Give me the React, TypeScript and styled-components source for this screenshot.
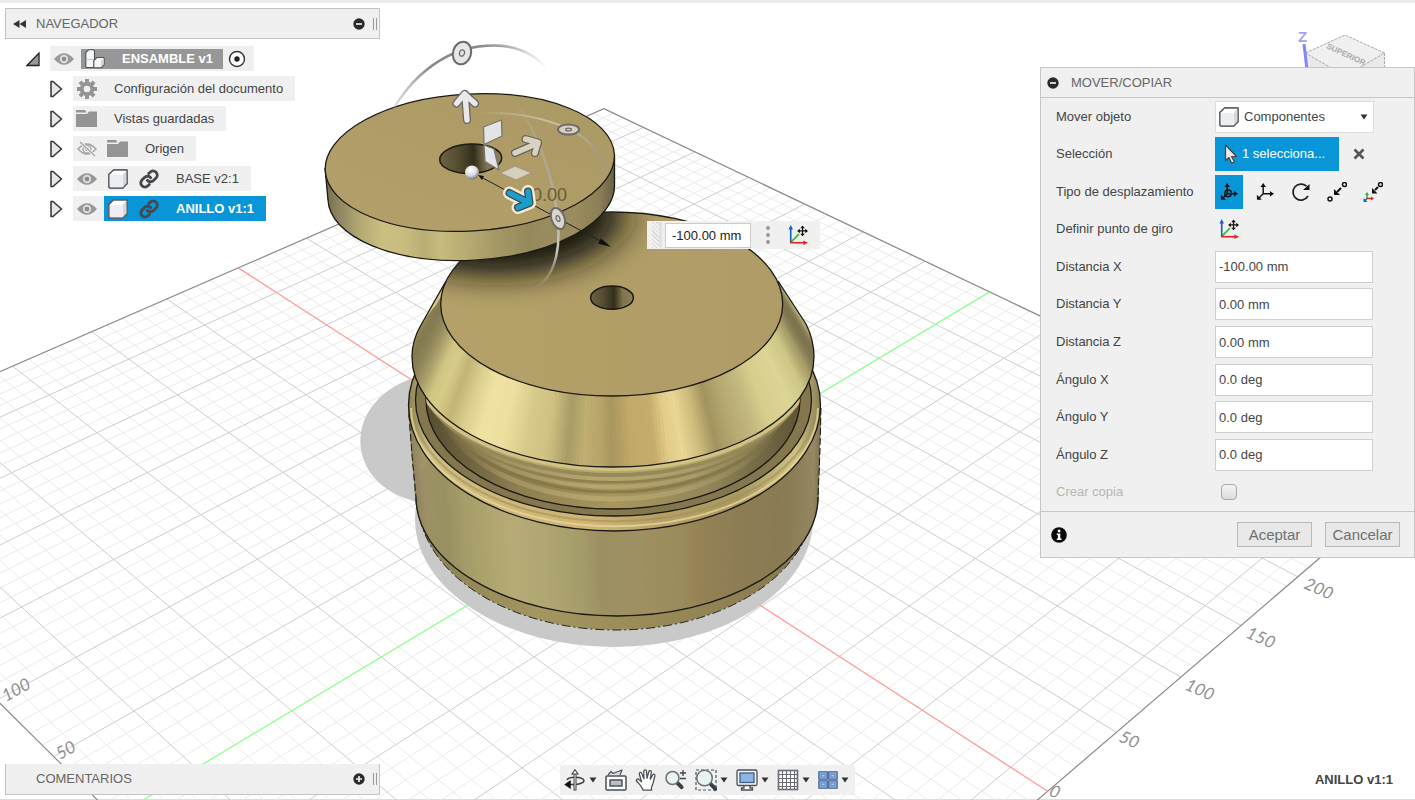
import React from 'react';
import styled, { createGlobalStyle, css } from 'styled-components';

const GlobalStyle = createGlobalStyle`
  *, *::before, *::after { box-sizing: border-box; }
  body { margin: 0; background: #fff; }
  body, button, input, select {
    font-family: "Liberation Sans", Arial, sans-serif;
    font-size: 13px;
    line-height: 16px;
    color: #444;
  }
  button { border: 0; padding: 0; background: none; cursor: pointer; }
  svg { display: block; flex: none; }
`;

/* ---------- 3D scene maths ---------- */

type Point = [number, number];

/* Perspective projection of a ground-plane point, in millimetres. */
const project = (x: number, y: number): Point => {
  const w = 1 - 0.000576 * x + 0.000578 * y;
  return [
    (619.3 + 0.9832 * x + 1.8063 * y) / w,
    (514.2 + 0.5702 * x - 0.5722 * y) / w,
  ];
};

const GRID = { x0: -340, x1: 270, y0: -290, y1: 300 };

const pt = ([x, y]: Point) => `${x.toFixed(1)},${y.toFixed(1)}`;
const lineX = (x: number) => `M${pt(project(x, GRID.y0))}L${pt(project(x, GRID.y1))}`;
const lineY = (y: number) => `M${pt(project(GRID.x0, y))}L${pt(project(GRID.x1, y))}`;

const steps = (from: number, to: number, keep: (v: number) => boolean) => {
  const out: number[] = [];
  for (let v = from; v <= to; v += 10) if (keep(v)) out.push(v);
  return out;
};
const gridPath = (keep: (v: number) => boolean) =>
  steps(GRID.x0, GRID.x1, keep).map(lineX).join('') +
  steps(GRID.y0, GRID.y1, keep).map(lineY).join('');

const minorGrid = gridPath((v) => v % 50 !== 0);
const majorGrid = gridPath((v) => v % 50 === 0 && v !== 0);
const border =
  'M' +
  [
    project(GRID.x0, GRID.y0),
    project(GRID.x0, GRID.y1),
    project(GRID.x1, GRID.y1),
    project(GRID.x1, GRID.y0),
  ].map(pt).join('L') + 'Z';

type Stop = [number, string];
type Ring = { cx: number; cy: number; rx: number; ry: number };

const mix = (stops: Stop[], x: number) => {
  const i = stops.findIndex(([p]) => p >= x);
  if (i === 0) return stops[0][1];
  if (i < 0) return stops[stops.length - 1][1];
  const [p0, c0] = stops[i - 1];
  const [p1, c1] = stops[i];
  const k = (x - p0) / (p1 - p0);
  const ch = (c: string, n: number) => parseInt(c.slice(1 + n * 2, 3 + n * 2), 16);
  const rgb = [0, 1, 2].map((n) => Math.round(ch(c0, n) + (ch(c1, n) - ch(c0, n)) * k));
  return `rgb(${rgb.join(',')})`;
};

/* Shaded surface of revolution between two rings, one facet per degree. */
const Surface = ({ top, bottom, stops, from = 0, to = 180 }: {
  top: Ring; bottom: Ring; stops: Stop[]; from?: number; to?: number;
}) => {
  const at = (r: Ring, deg: number): Point => {
    const a = (deg * Math.PI) / 180;
    return [r.cx + r.rx * Math.cos(a), r.cy + r.ry * Math.sin(a)];
  };
  const facets: React.ReactNode[] = [];
  for (let d = from; d < to; d += 1) {
    const fill = mix(stops, at(bottom, d + 0.5)[0]);
    facets.push(
      <polygon
        key={d}
        points={[at(top, d), at(top, d + 1), at(bottom, d + 1), at(bottom, d)].map(pt).join(' ')}
        fill={fill}
        stroke={fill}
        strokeWidth="0.7"
      />,
    );
  }
  return <g>{facets}</g>;
};

const CONE_TOP: Ring = { cx: 611.7, cy: 304, rx: 171, ry: 92 };
const CONE_BOTTOM: Ring = { cx: 613, cy: 357, rx: 201, ry: 110 };

const coneStops: Stop[] = [
  [412, '#857b52'], [420, '#a99f6c'], [428, '#d2c684'], [436, '#d9cc8a'], [448, '#c3b577'],
  [462, '#dccf8e'], [478, '#f0e2a2'], [500, '#efe1a0'], [524, '#d8ca8a'], [545, '#d2c283'],
  [567, '#a89c66'], [583, '#c0af70'], [600, '#b7a569'], [612, '#a9965f'], [633, '#c4aa6a'],
  [655, '#c6ac6c'], [670, '#e2ce88'], [684, '#ead796'], [700, '#cfbd7d'], [717, '#a3945f'],
  [735, '#b6a970'], [755, '#c3b981'], [770, '#d8cf8d'], [792, '#ddd697'], [804, '#d0c888'],
  [811, '#a59b68'], [814, '#7d7450'],
];
const ringStops: Stop[] = [
  [328, '#7c7353'], [345, '#9a9068'], [360, '#b5aa75'], [385, '#cdc183'], [405, '#c9bd80'],
  [425, '#b9ae73'], [440, '#c8bc80'], [462, '#bcae74'], [500, '#a39765'], [530, '#958a5c'],
  [545, '#998c5f'], [575, '#9c8d60'], [600, '#8c7f58'], [614, '#6c6348'],
];
const bodyStops: Stop[] = [
  [415, '#8d8360'], [428, '#9e9267'], [450, '#9a9162'], [470, '#a79e69'], [515, '#b7ac77'],
  [545, '#b0a772'], [580, '#a69d6c'], [602, '#9c9062'], [640, '#9e9062'], [680, '#9b8c5c'],
  [700, '#968255'], [740, '#8d7d55'], [780, '#897b54'], [812, '#948762'], [818, '#7f7454'],
];

const CONE_SIDES = 'M446 281L421 325Q412 340 412 357A201 110 0 0 0 814 357Q814 340 806 324L778 281';

const Model = () => (
  <g>
    <path d="M413 378C378 390 356 418 361 450C367 482 396 499 424 503Z" fill="#c9c9c9" />
    <ellipse cx="614" cy="519" rx="199" ry="128" fill="#c9c9c9" />

    {/* base: fillet, outer wall and rim */}
    <ellipse cx="616" cy="500" rx="198" ry="130" fill="url(#fillet)" stroke="#222" strokeWidth="1" strokeDasharray="9 3 2 3" />
    <Surface
      top={{ cx: 614.5, cy: 405, rx: 206, ry: 126 }}
      bottom={{ cx: 617, cy: 497, rx: 201, ry: 119 }}
      stops={bodyStops}
    />
    <path d="M416 497A201 119 0 0 0 818 497" fill="none" stroke="#1b1a14" strokeWidth="1.3" />
    <path d="M409 414L412 455L416 497M821 408L820 450L818 497" fill="none" stroke="#1b1a14" strokeWidth="1" strokeDasharray="7 3" />
    <ellipse cx="614.5" cy="405" rx="206" ry="126" fill="url(#rim)" stroke="#1b1a14" strokeWidth="1.3" />
    <path d="M411 408A203 118 0 0 0 818 408" fill="none" stroke="#e6d69a" strokeWidth="2" opacity=".8" />
    <path d="M413 404A201 117 0 0 0 816 404" fill="none" stroke="#a18f59" strokeWidth="2" opacity=".6" />
    <ellipse cx="613.5" cy="400" rx="198" ry="116" fill="#84774e" stroke="#1b1a14" strokeWidth="1.3" />
    <ellipse cx="613" cy="400" rx="187" ry="109" fill="url(#groove)" stroke="#1b1a14" strokeWidth="1.3" />
    <g clipPath="url(#grooveClip)" fill="none">
      <ellipse cx="613" cy="389" rx="178" ry="110" stroke="url(#sheen)" strokeWidth="5" />
      <ellipse cx="613" cy="384" rx="180" ry="108" stroke="#857647" strokeWidth="3" opacity=".8" />
      <ellipse cx="613" cy="379" rx="184" ry="108" stroke="url(#sheen)" strokeWidth="4" />
      <ellipse cx="613" cy="374" rx="188" ry="108" stroke="#8f8052" strokeWidth="3" />
      <ellipse cx="613" cy="370" rx="192" ry="109" stroke="url(#sheen)" strokeWidth="4" />
      <ellipse cx="613" cy="366" rx="196" ry="109" stroke="#978a5a" strokeWidth="4" />
      <ellipse cx="613" cy="362" rx="198" ry="109" stroke="#b9a86c" strokeWidth="4" />
      <ellipse cx="613" cy="359" rx="201" ry="110" stroke="#d2c384" strokeWidth="4" />
    </g>

    {/* base: conical head */}
    <path d={CONE_SIDES} fill="#9a9062" />
    <g clipPath="url(#coneSides)">
      <Surface top={CONE_TOP} bottom={CONE_BOTTOM} stops={coneStops} from={-28} to={208} />
    </g>
    <path d={CONE_SIDES} fill="none" stroke="#1b1a14" strokeWidth="1.3" />
    <ellipse {...CONE_TOP} fill="url(#coneTop)" stroke="#1b1a14" strokeWidth="1.3" />
    <g clipPath="url(#coneClip)">
      <ellipse cx="496" cy="214" rx="128" ry="62" fill="#17130a" filter="url(#soft)" />
    </g>
    <ellipse cx="612" cy="297.700" rx="21.400" ry="11.600" fill="url(#bore)" stroke="#1b1a14" strokeWidth="1.500" />

    {/* ring */}
    <path d="M325 168L328 200A143 68 -3.300 0 0 614.500 184L614.500 155Z" fill="#a39765" />
    <g clipPath="url(#ringClip)">
      <Surface
        top={{ cx: 470, cy: 150, rx: 146, ry: 71 }}
        bottom={{ cx: 471, cy: 195, rx: 146, ry: 74 }}
        stops={ringStops}
        from={-10}
        to={190}
      />
    </g>
    <path d="M325 168L328 200A143 68 -3.300 0 0 614.500 184L614.500 155" fill="none" stroke="#1b1a14" strokeWidth="1.3" />
    <ellipse cx="469.800" cy="162.500" rx="144.800" ry="68.500" transform="rotate(-3.300 469.800 162.500)" fill="url(#ringTop)" stroke="#1b1a14" strokeWidth="1.3" />
    <ellipse cx="470.700" cy="158.700" rx="31" ry="14.700" transform="rotate(-2 470.700 158.700)" fill="url(#bore)" stroke="#1b1a14" strokeWidth="1.5" />
  </g>
);

const Arrow = ({ shaft, head, fill, halo }: { shaft: string; head: string; fill: string; halo?: string }) => {
  const d = shaft + head;
  return (
    <g fill="none" strokeLinejoin="round" strokeLinecap="round">
      {halo && <path d={d} stroke={halo} strokeWidth="13" />}
      <path d={d} stroke={halo ? '#3d4a4c' : '#66645f'} strokeWidth="8" />
      <path d={d} stroke={fill} strokeWidth="5.500" />
    </g>
  );
};

const Handle = ({ x, y, rx, ry, turn, fill }: { x: number; y: number; rx: number; ry: number; turn: number; fill: string }) => (
  <g transform={`translate(${x} ${y}) rotate(${turn})`} stroke="#6a6a68" fill={fill}>
    <ellipse rx={rx} ry={ry} strokeWidth="2" />
    <ellipse rx={rx * 0.28} ry={ry * 0.28} strokeWidth="1.300" />
  </g>
);

const Manipulator = () => (
  <g>
    <g fill="none" strokeLinecap="round">
      <path d="M380 140C390 106 417 66 462 50C497 41 527 44 548 70" stroke="url(#arcA)" strokeWidth="2.500" />
      <path d="M477 113C512 111 545 118 569 129C592 140 608 160 603 178" stroke="url(#arcB)" strokeWidth="2" />
      <path d="M515 100C538 134 553 176 557 214C562 250 554 278 535 288" stroke="url(#arcC)" strokeWidth="2.500" />
    </g>
    <text x="532" y="201" fontFamily="Liberation Sans, Arial, sans-serif" fontSize="18" fill="#6b5d38">0.00</text>
    <path d="M480 176.500L604 243" stroke="#222" strokeWidth="1" />
    <path d="M611 247L598 243.500L601 238.500ZM478 175L484 176L482 180Z" fill="#111" />
    <Arrow shaft="M467 120L465 94" head="M456.500 103.500L464.500 94L475 103.500" fill="#e9e9eb" />
    <Arrow shaft="M515 153L538 143" head="M525.500 139L538 142.500L535 153" fill="#d9d2c3" />
    <g stroke="#77756f" strokeWidth="1.300" strokeLinejoin="round">
      <path d="M483.500 127L501.500 120L502 136L484 144.500Z" fill="#e4e4e6" />
      <path d="M484 145L494 149L499 170L485 161.500Z" fill="#e4e4e6" />
      <path d="M500 173L515 166L531.500 173L516 180Z" fill="#d6cebf" stroke="#a79a7c" />
    </g>
    <circle cx="472" cy="172.500" r="7" fill="url(#ball)" />
    <Arrow shaft="M509.500 193L528 202.500" head="M528 191.500L529.500 203L518 207.500" fill="#1a9fcb" halo="#f3ead6" />
    <Handle x={462} y={53} rx={9} ry={11.5} turn={16} fill="#e6e6e8" />
    <Handle x={568.5} y={129.500} rx={10.500} ry={5} turn={0} fill="#d8d2c3" />
    <Handle x={558} y={218.500} rx={6.500} ry={11} turn={-20} fill="#dad6cc" />
  </g>
);

const gridLabels: { text: string; x: number; y: number; turn: number }[] = [
  { text: '100', x: 6, y: 702, turn: -29 },
  { text: '50', x: 60, y: 760, turn: -29 },
  { text: '0', x: 1048, y: 795, turn: 24 },
  { text: '50', x: 1118, y: 741, turn: 24 },
  { text: '100', x: 1184, y: 689, turn: 24 },
  { text: '150', x: 1245, y: 637, turn: 24 },
  { text: '200', x: 1303, y: 588, turn: 24 },
];

const SceneSvg = styled.svg`
  position: absolute;
  inset: 0;
  width: 100%;
  height: 100%;
`;

const Scene = () => (
  <SceneSvg viewBox="0 0 1415 800" preserveAspectRatio="xMinYMin slice" aria-label="Vista del modelo">
    <defs>
      <linearGradient id="ringTop" x1="0" x2="1" y1="1" y2="0">
        <stop offset="0" stopColor="#b3a06b" /><stop offset=".5" stopColor="#af9c67" /><stop offset="1" stopColor="#ab9965" />
      </linearGradient>
      <linearGradient id="coneTop" x1="0" x2="1">
        <stop offset="0" stopColor="#b4a069" /><stop offset=".3" stopColor="#b3a068" /><stop offset="1" stopColor="#ae9b66" />
      </linearGradient>
      <linearGradient id="bore" x1="0" x2="1">
        <stop offset="0" stopColor="#6d6443" /><stop offset=".3" stopColor="#544c30" /><stop offset=".55" stopColor="#332d1b" />
        <stop offset=".75" stopColor="#7e734c" /><stop offset="1" stopColor="#8d8158" />
      </linearGradient>
      <linearGradient id="rim" x1="0" x2="1">
        <stop offset="0" stopColor="#8d8055" /><stop offset=".05" stopColor="#cdbf84" /><stop offset=".2" stopColor="#cdb87a" />
        <stop offset=".45" stopColor="#d0b574" /><stop offset=".6" stopColor="#b7a066" /><stop offset=".8" stopColor="#a89860" />
        <stop offset=".94" stopColor="#cfc282" /><stop offset="1" stopColor="#8a7f55" />
      </linearGradient>
      <linearGradient id="fillet" x1="0" x2="1">
        <stop offset="0" stopColor="#8a7f57" /><stop offset=".3" stopColor="#a3965f" /><stop offset=".6" stopColor="#998a58" />
        <stop offset="1" stopColor="#85774f" />
      </linearGradient>
      <linearGradient id="groove" x1="0" x2="1">
        <stop offset="0" stopColor="#564d30" /><stop offset=".25" stopColor="#8d7f52" /><stop offset=".5" stopColor="#a8965c" />
        <stop offset=".75" stopColor="#94865a" /><stop offset="1" stopColor="#5e5436" />
      </linearGradient>
      <linearGradient id="sheen" x1="0" x2="1">
        <stop offset="0" stopColor="#5e5436" /><stop offset=".2" stopColor="#a09160" /><stop offset=".45" stopColor="#b8a66c" />
        <stop offset=".7" stopColor="#aa9e6a" /><stop offset=".85" stopColor="#8f8458" /><stop offset="1" stopColor="#5e5436" />
      </linearGradient>
      <linearGradient id="arcA" gradientUnits="userSpaceOnUse" x1="380" x2="548" y1="0" y2="0">
        <stop offset="0" stopColor="#999" stopOpacity="0" /><stop offset=".3" stopColor="#888" /><stop offset=".6" stopColor="#888" />
        <stop offset=".8" stopColor="#bbb" /><stop offset="1" stopColor="#ccc" stopOpacity="0" />
      </linearGradient>
      <linearGradient id="arcB" gradientUnits="userSpaceOnUse" x1="477" x2="610" y1="0" y2="0">
        <stop offset="0" stopColor="#cfc8b4" stopOpacity="0" /><stop offset=".6" stopColor="#c9c3b2" /><stop offset=".9" stopColor="#a39c88" />
        <stop offset="1" stopColor="#a39c88" stopOpacity=".3" />
      </linearGradient>
      <linearGradient id="arcC" gradientUnits="userSpaceOnUse" x1="0" x2="0" y1="100" y2="288">
        <stop offset="0" stopColor="#bbb6a6" stopOpacity="0" /><stop offset=".4" stopColor="#a9a69c" /><stop offset=".8" stopColor="#c9c6bd" />
        <stop offset="1" stopColor="#ccc" stopOpacity="0" />
      </linearGradient>
      <radialGradient id="ball" cx=".4" cy=".3" r=".7">
        <stop offset="0" stopColor="#fff" /><stop offset=".6" stopColor="#dcdce0" /><stop offset="1" stopColor="#77767a" />
      </radialGradient>
      <filter id="soft" x="-30%" y="-60%" width="160%" height="220%"><feGaussianBlur stdDeviation="19 15" /></filter>
      <clipPath id="coneClip"><ellipse cx="611.7" cy="304" rx="170.500" ry="91.500" /></clipPath>
      <clipPath id="coneSides"><path d={CONE_SIDES} /></clipPath>
      <clipPath id="grooveClip"><ellipse cx="613" cy="400" rx="186.500" ry="108.500" /></clipPath>
      <clipPath id="ringClip"><path d="M325 168L328 200A143 68 -3.300 0 0 614.500 184L614.500 155Z" /></clipPath>
    </defs>

    <path d={minorGrid} stroke="#ebebeb" strokeWidth="1" fill="none" />
    <path d={majorGrid} stroke="#cdcdcd" strokeWidth="1" fill="none" />
    <path d={border} stroke="#8c8c8c" strokeWidth="1.200" fill="none" />
    <path d={lineY(0)} stroke="#ff9a9a" strokeWidth="1.300" />
    <path d={lineX(0)} stroke="#8dff8d" strokeWidth="1.300" />
    <g fontFamily="Lato, sans-serif" fontSize="17" fontStyle="italic" fill="#8f8f8f">
      {gridLabels.map((l) => (
        <text key={l.text + l.x} transform={`translate(${l.x} ${l.y}) rotate(${l.turn})`}>{l.text}</text>
      ))}
    </g>

    <Model />
    <Manipulator />

    {/* view cube */}
    <path d="M1305.500 53L1345 35L1384.500 53L1345 76Z" fill="#f0f0f0" />
    <path d="M1305.500 53L1345 76L1345 90L1306 90ZM1384.500 53L1345 76L1345 90L1384 90Z" fill="#e9e9e9" />
    <path d="M1305.500 53L1345 35L1384.500 53L1345 76ZM1305.500 53V80M1384.500 53V80" fill="none" stroke="#aaa" strokeDasharray="3 1" />
    <text transform="translate(1326 48) rotate(25)" fontFamily="Liberation Sans, Arial, sans-serif" fontSize="8" fontWeight="700" fill="#aaa">SUPERIOR</text>
    <path d="M1304 44L1307 70" stroke="#8484ff" strokeWidth="3" />
    <text x="1298" y="42" fontFamily="Liberation Sans, Arial, sans-serif" fontSize="15" fontWeight="700" fill="#a3a3f6">Z</text>
  </SceneSvg>
);

/* ---------- icons ---------- */

const EyeIcon = ({ off = false }: { off?: boolean }) => (
  <svg width="20" height="16" viewBox="0 0 20 16">
    {off ? (
      <g fill="none" stroke="#a3a3a3" strokeWidth="1.300">
        <path d="M1 8Q10 -2 19 8Q10 18 1 8Z" />
        <circle cx="10" cy="8" r="4" />
        <circle cx="10" cy="8" r="1.500" />
        <path d="M3 1L18 15" stroke="#f0f0f0" strokeWidth="3" />
        <path d="M3 1L18 15" />
      </g>
    ) : (
      <g>
        <path d="M0 8Q10 -3.500 20 8Q10 19.500 0 8Z" fill="#989898" />
        <circle cx="10" cy="8" r="4.200" fill="#dcdcdc" />
        <circle cx="10" cy="8" r="2.300" fill="#8b8b8b" />
      </g>
    )}
  </svg>
);

const FolderIcon = () => (
  <svg width="21" height="17" viewBox="0 0 21 17" fill="#949494">
    <path d="M0 0H9L10.500 2.500H0ZM0 4H11L13 1.500H21V17H0Z" />
  </svg>
);

const GearIcon = () => (
  <svg width="20" height="20" viewBox="-10 -10 20 20">
    {[0, 45, 90, 135].map((a) => (
      <rect key={a} x="-2" y="-10" width="4" height="20" fill="#949494" transform={`rotate(${a})`} />
    ))}
    <circle r="5.200" fill="none" stroke="#949494" strokeWidth="4" />
    <circle r="3.300" fill="#f0f0f0" />
  </svg>
);

const CubeIcon = () => (
  <svg width="20" height="20" viewBox="0 0 20 20" stroke="#5b5f66" strokeWidth="1.200" strokeLinejoin="round">
    <path d="M.8 5.500L5.500 .8H19L19.200 14.500L14.800 19.200H2L.8 18Z" fill="#fff" />
    <path d="M14.500 6L19 1.200V14.300L14.800 19Z" fill="#d5d8de" stroke="none" />
    <path d="M1.500 6H14.500V18.500H2Z" fill="#eceef1" stroke="none" />
    <path d="M.8 5.500L5.500 .8H19L19.200 14.500L14.800 19.200H2L.8 18Z" fill="none" />
  </svg>
);

const AssemblyIcon = () => (
  <svg width="20" height="20" viewBox="0 0 20 20" stroke="#4f5359" strokeWidth="1.100" strokeLinejoin="round" fill="#f6f7f9">
    <path d="M.8 3.500L3.500 .8H8.500L9.500 2V9L9 18.500H1.500L.8 17.500Z" />
    <path d="M1 10.500H8" stroke="#c3c7cd" />
    <path d="M8.800 11.500L12 8.500H18.500L19.200 9.500V15.500L16 18.800H9.500L8.800 18Z" />
    <path d="M16 12L18.600 9.500V15.200L16 18Z" fill="#d0d3d9" stroke="none" />
  </svg>
);

const LinkIcon = () => (
  <svg width="20" height="20" viewBox="0 0 24 24" fill="none" stroke="#46484d" strokeWidth="3.400" strokeLinecap="round">
    <path d="M10 13.500a5 5 0 0 0 7.400 .4l3-3a5 5 0 0 0-7.100-7.100l-1.700 1.700" />
    <path d="M14 10.500a5 5 0 0 0-7.400-.4l-3 3a5 5 0 0 0 7.100 7.100l1.700-1.700" />
  </svg>
);

const ToggleIcon = ({ open = false }: { open?: boolean }) => (
  <svg width="14" height="18" viewBox="0 0 14 18">
    {open ? (
      <path d="M13 3V15.500H1Z" fill="#999" stroke="#222" strokeWidth="1.300" />
    ) : (
      <path d="M1 1.500H3L11.500 9L3 16.500H1Z" fill="#e6e6e6" stroke="#333" strokeWidth="1.500" strokeLinejoin="round" />
    )}
  </svg>
);

const RoundIcon = ({ plus = false }: { plus?: boolean }) => (
  <svg width="12" height="12" viewBox="0 0 12 12">
    <circle cx="6" cy="6" r="5.700" fill="#2b2b2b" />
    <path d={plus ? 'M3 6H9M6 3V9' : 'M3 6H9'} stroke="#eee" strokeWidth="1.700" />
  </svg>
);

const PivotIcon = () => (
  <svg width="20" height="20" viewBox="0 0 22 22" fill="none">
    <path d="M3 19L12 10" stroke="#37c32a" strokeWidth="2" />
    <path d="M3 19.500V4" stroke="#1b62b5" strokeWidth="1.800" />
    <path d="M3 0L5.500 5H.5Z" fill="#1b62b5" />
    <path d="M2.500 19.500H18" stroke="#e02525" strokeWidth="1.800" />
    <path d="M22 19.500L17 17V22Z" fill="#e02525" />
    <path d="M16 2V11M11.500 6.500H20.500" stroke="#111" strokeWidth="1.400" />
    <path d="M16 .5L18.500 3.500H13.500ZM16 12.500L13.500 9.500H18.500ZM10 6.500L13 4V9ZM22 6.500L19 9V4Z" fill="#111" />
  </svg>
);

const AxesIcon = ({ ring = false }: { ring?: boolean }) => (
  <svg width="18" height="18" viewBox="0 0 20 20" fill="none" stroke="#111" strokeWidth="1.600">
    {ring && <circle cx="9" cy="11.500" r="3.700" />}
    <path d="M8 3V12H17M8 12L3 17" />
    <path d="M8 0L11 4.500H5ZM20 12L15.500 9V15ZM1 18.500V13L6.500 18.500Z" fill="#111" stroke="none" />
  </svg>
);

const RotateIcon = () => (
  <svg width="20" height="20" viewBox="0 0 20 20" fill="none" stroke="#222" strokeWidth="1.700">
    <path d="M15.500 4.200A8 8 0 1 0 17 14" />
    <path d="M18.500 2V8H12Z" fill="#111" stroke="none" />
  </svg>
);

const PointToPointIcon = () => (
  <svg width="20" height="20" viewBox="0 0 20 20" fill="none" stroke="#111" strokeWidth="1.500">
    <circle cx="3" cy="17" r="2" />
    <circle cx="17.500" cy="2.500" r="2" />
    <path d="M14 6L10 10" strokeWidth="2" />
    <path d="M7 13V7L13 13Z" fill="#111" stroke="none" />
  </svg>
);

const PointToPositionIcon = () => (
  <svg width="20" height="20" viewBox="0 0 20 20" fill="none" strokeWidth="1.500">
    <circle cx="17.500" cy="2.500" r="2" stroke="#111" />
    <path d="M15 5L12 8" stroke="#111" strokeWidth="2" />
    <path d="M9 11.500V6L14.500 11.500Z" fill="#111" />
    <path d="M4 17V12" stroke="#2faf2a" />
    <path d="M4 10L6 13H2Z" fill="#2faf2a" />
    <path d="M4 16.500H9" stroke="#e02525" />
    <path d="M11 16.500L8 14.500V18.500Z" fill="#e02525" />
    <path d="M4 16.500L2 18.500" stroke="#1b62b5" />
    <path d="M.5 20V16L4.500 20Z" fill="#1b62b5" />
  </svg>
);

const CursorIcon = () => (
  <svg width="14" height="20" viewBox="0 0 14 20">
    <path d="M1.500 1L12.500 12.500H7.500L10.500 18L7.500 19L5 13.500L1.500 16.500Z" fill="#e9e9e9" stroke="#444" strokeWidth="1.200" strokeLinejoin="round" />
  </svg>
);

const CrossIcon = () => (
  <svg width="12" height="12" viewBox="0 0 12 12"><path d="M1.500 1.500L10.500 10.500M10.500 1.500L1.500 10.500" stroke="#555" strokeWidth="2.600" /></svg>
);

const InfoIcon = () => (
  <svg width="16" height="16" viewBox="0 0 16 16">
    <circle cx="8" cy="8" r="7.800" fill="#0a0a0a" />
    <path d="M6.800 2.800H9.300V5.200H6.800ZM5.800 6.500H9.300V11.500H10.500V13H5.800V11.500H6.900V8H5.800Z" fill="#fff" />
  </svg>
);

const CaretIcon = () => (
  <svg width="8" height="6" viewBox="0 0 8 6"><path d="M.5 .5H7.500L4 5.500Z" fill="#333" /></svg>
);

const OrbitIcon = () => (
  <svg width="22" height="22" viewBox="0 0 22 22" fill="none" stroke="#3a3e45" strokeWidth="1.500">
    <path d="M3 11C4 8 15 7 19 10C22 13 17 15 12 15.500" />
    <path d="M11 4V21.500" strokeWidth="3" />
    <path d="M11 4V20.500" stroke="#f4f4f4" strokeWidth="1" />
    <path d="M11 .8L14 5H8Z" fill="#fff" strokeWidth="1.100" />
    <path d="M5 15.500H10" />
    <path d="M1.500 15.500L6 12.500V18.500Z" fill="#111" stroke="#111" />
  </svg>
);
const LookIcon = () => (
  <svg width="22" height="22" viewBox="0 0 22 22" fill="#fff" stroke="#4b5058" strokeWidth="1.500" strokeLinejoin="round">
    <path d="M3 6L6 2.500L8 4.500L17 1L15 6" fill="#dcdfe3" strokeWidth="1.200" />
    <rect x="1" y="7" width="20" height="14" rx="1" />
    <rect x="5" y="11" width="12" height="6" fill="#b9c0c4" />
  </svg>
);
const HandIcon = () => (
  <svg width="22" height="22" viewBox="0 0 22 22" fill="#fff" stroke="#4b5058" strokeWidth="1.300" strokeLinejoin="round">
    <path d="M8 21.200C7 17.500 3.500 14.500 1.300 11.500C1.200 9.800 3 9.500 4.200 10.700L6.500 12.800L4.300 5C4.200 3 6.300 2.900 6.900 4.700L8.900 9.700L8.800 2.200C9.100 .3 11.300 .4 11.500 2.300L12 9.300L13.800 2.700C14.400 1 16.500 1.500 16.300 3.400L15.300 10.200L17.800 5.800C18.700 4.500 20.300 5.400 19.900 7C18.700 10.500 18.500 15 16.500 18V21.200Z" />
  </svg>
);
const Lens = ({ x, y, r }: { x: number; y: number; r: number }) => (
  <g>
    <path d={`M${x + r * 0.7} ${y + r * 0.7}L${x + r * 1.4} ${y + r * 1.4}`} stroke="#3b4047" strokeWidth="4" strokeLinecap="round" />
    <circle cx={x} cy={y} r={r} fill="#e9f3f2" stroke="#6a7178" strokeWidth="1.500" />
  </g>
);
const ZoomIcon = () => (
  <svg width="22" height="22" viewBox="0 0 22 22">
    <Lens x={7.5} y={9} r={6.5} />
    <path d="M18 1V7M15 4H21M15 9.500H21" stroke="#444" strokeWidth="1.300" />
  </svg>
);
const ZoomWindowIcon = () => (
  <svg width="22" height="22" viewBox="0 0 22 22">
    <rect x="1" y="1" width="20" height="20" fill="none" stroke="#555" strokeWidth="1.200" strokeDasharray="3 2" />
    <Lens x={9.500} y={9} r={7.800} />
  </svg>
);
const DisplayIcon = () => (
  <svg width="22" height="22" viewBox="0 0 22 22" stroke="#4b5058" strokeWidth="1.300">
    <path d="M8 16H14V19H16.500V21H5.500V19H8Z" fill="#fff" />
    <rect x="1" y="1" width="20" height="15.500" rx="1.500" fill="#f4f4f4" />
    <rect x="4" y="4" width="14" height="9.500" fill="#8fb5e3" stroke="#3d5d8c" />
  </svg>
);
const GridIcon = () => (
  <svg width="22" height="22" viewBox="0 0 22 22" fill="none" stroke="#686c72">
    <rect x="1.500" y="1.500" width="19" height="19" fill="#fff" strokeWidth="1.600" />
    <path d="M5.500 1V21M9.500 1V21M13.500 1V21M17.500 1V21M1 5.500H21M1 9.500H21M1 13.500H21M1 17.500H21" />
  </svg>
);
const ViewportsIcon = () => (
  <svg width="20" height="18" viewBox="0 0 20 18" stroke="#40608f" strokeWidth="1.100">
    <path d="M.8 .8H9.300V8.300H.8ZM10.700 .8H19.200V8.300H10.700ZM.8 9.700H9.300V17.200H.8ZM10.700 9.700H19.200V17.200H10.700Z" fill="#82a8dc" />
    <path d="M3.500 3.500H7V6H3.500ZM13 3.500H16.500V6H13ZM3.500 12H7V14.500H3.500ZM13 12H16.500V14.500H13Z" fill="#a9c6ee" stroke="#5c82b8" strokeWidth=".7" />
  </svg>
);
const RewindIcon = () => (
  <svg width="13" height="8" viewBox="0 0 13 8"><path d="M6.500 0V8L0 4ZM13 0V8L6.500 4Z" fill="#333" /></svg>
);
const TargetIcon = () => (
  <svg width="18" height="18" viewBox="0 0 18 18">
    <circle cx="9" cy="9" r="7.500" fill="#fff" stroke="#333" strokeWidth="1.400" /><circle cx="9" cy="9" r="2.700" fill="#222" />
  </svg>
);

/* ---------- layout ---------- */

const Workspace = styled.main`
  position: relative;
  display: flex;
  flex-direction: column;
  justify-content: space-between;
  min-height: 100vh;
  padding-top: 3px;
  overflow: hidden;
  box-shadow: inset 0 3px #ececec, inset 0 -1px #dcdcdc;
`;

const Upper = styled.div`
  position: relative;
  display: flex;
  justify-content: space-between;
  align-items: flex-start;
`;

const Lower = styled.div`
  position: relative;
  display: grid;
  grid-template-columns: 1fr auto 1fr;
  align-items: center;
  padding-bottom: 5px;
`;

const Bar = styled.header<{ $docked?: boolean }>`
  display: flex;
  align-items: center;
  width: 375px;
  height: 31px;
  padding: 0 2px 0 7px;
  background: #f0f0f0;
  border: 1px solid #c4c4c4;
  ${({ $docked }) => $docked && css`
    margin-left: 5px;
    border-top: 0;
  `}
`;

const BarLead = styled.span`
  width: 23px;
`;

const BarTitle = styled.h2`
  flex: 1;
  margin: 0;
  font-size: 13px;
  font-weight: 400;
  color: #666;
`;

const Grip = styled.span`
  width: 4px;
  height: 12px;
  margin-left: 8px;
  border: solid #999;
  border-width: 0 1px;
`;

const BrowserPanel = styled.nav`
  padding: 5px 0 0 5px;
`;

const Tree = styled.ul`
  display: flex;
  flex-direction: column;
  gap: 5px;
  margin: 7px 0 0;
  padding: 0;
  list-style: none;
`;

const TreeItem = styled.li<{ $level: number }>`
  display: flex;
  align-items: center;
  height: 25px;
  padding-left: ${({ $level }) => ($level ? 45 : 21)}px;
`;

const Toggle = styled.button<{ $wide?: boolean }>`
  width: ${({ $wide }) => ($wide ? 24 : 23)}px;
`;

const TreeBody = styled.div`
  display: flex;
  align-items: center;
  height: 25px;
  background: #f0f0f0;
`;

const Slot = styled.span`
  display: flex;
  align-items: center;
  justify-content: center;
  width: 27px;
  margin-right: 4px;
`;

const NodeLabel = styled.button<{ $tone?: 'root' | 'active' }>`
  display: flex;
  align-items: center;
  height: 25px;
  padding-right: 12px;
  white-space: nowrap;
  ${({ $tone }) => $tone && css`
    font-weight: 700;
    color: #fff;
    background: ${$tone === 'root' ? '#979797' : '#0896d8'};
  `}
  ${({ $tone }) => $tone === 'root' && css`
    height: 20px;
    padding-right: 10px;
  `}
`;

const NodeText = styled.span`
  padding-left: 10px;
`;

const Dialog = styled.form`
  width: 375px;
  margin-top: 64px;
  background: #f0f0f0;
  border: 1px solid #c6c6c6;
`;

const DialogHead = styled.header`
  display: flex;
  align-items: center;
  gap: 12px;
  height: 30px;
  padding-left: 6px;
  border-bottom: 1px solid #c6c6c6;
`;

const Fields = styled.div`
  display: grid;
  grid-auto-rows: 1fr;
  min-height: 413px;
  padding-left: 15px;
`;

const Field = styled.div`
  display: grid;
  grid-template-columns: 159px 1fr;
  align-items: center;
`;

const FieldLabel = styled.label<{ $dim?: boolean }>`
  color: ${({ $dim }) => ($dim ? '#b5b5b5' : '#444')};
`;

const Controls = styled.div`
  display: flex;
  align-items: center;
  gap: 8px;
`;

const TextBox = styled.input`
  width: 158px;
  height: 32px;
  padding: 0 3px;
  background: #fff;
  border: 1px solid #cfcfcf;
`;

const SelectBox = styled.div`
  position: relative;
  width: 159px;
  > svg { position: absolute; pointer-events: none; top: 6px; left: 4px; }
  > svg:last-child { top: 13px; left: auto; right: 6px; }
`;

const Select = styled.select`
  appearance: none;
  width: 100%;
  height: 32px;
  padding: 0 0 0 28px;
  background: #fff;
  border: 1px solid #dcdcdc;
  border-radius: 0;
`;

const PickButton = styled.button`
  display: flex;
  align-items: center;
  gap: 4px;
  width: 124px;
  height: 34px;
  padding-left: 9px;
  color: #fff;
  background: #0896d8;
`;

const IconButton = styled.button<{ $on?: boolean }>`
  display: flex;
  align-items: center;
  justify-content: center;
  width: 28px;
  height: 34px;
  background: ${({ $on }) => ($on ? '#0896d8' : 'none')};
`;

const ClearButton = styled(IconButton)`
  margin-left: -2px;
`;

const CheckBox = styled.input`
  appearance: none;
  width: 16px;
  height: 16px;
  margin: 0 6px;
  background: linear-gradient(#f4f4f4, #dcdcdc);
  border: 1px solid #a8a8a8;
  border-radius: 4px;
`;

const DialogFoot = styled.footer`
  display: flex;
  align-items: center;
  gap: 13px;
  height: 46px;
  padding: 0 14px 0 10px;
  border-top: 1px solid #c6c6c6;
`;

const InfoButton = styled.button`
  margin-right: auto;
`;

const PushButton = styled.button`
  width: 75px;
  height: 25px;
  font-size: 15px;
  color: #707070;
  background: #e8e8e8;
  border: 1px solid #b9b9b9;
`;

const FloatingInput = styled.div`
  position: absolute;
  top: 218px;
  left: 647px;
  display: flex;
  align-items: center;
  height: 28px;
  padding: 0 8px 0 5px;
  background: #f0f0f0;
`;

const DragStrip = styled.span`
  width: 10px;
  height: 26px;
  margin-right: 3px;
  background: repeating-linear-gradient(45deg, #d9d9d9 0 1px, #f0f0f0 1px 3px);
  border-right: 3px solid #e2e2e2;
`;

const FloatingBox = styled.input`
  width: 86px;
  height: 25px;
  padding: 0 6px;
  color: #222;
  background: #fff;
  border: 1px solid #ccc;
`;

const MoreButton = styled.button`
  display: grid;
  gap: 3px;
  width: 33px;
  justify-items: center;
`;

const Dot = styled.span`
  width: 4px;
  height: 4px;
  border-radius: 2px;
  background: #999;
`;

const NavToolbar = styled.div`
  display: flex;
  align-items: center;
  gap: 8px;
  height: 30px;
  padding: 0 6px 0 4px;
  background: #f0f0f0;
`;

const Tool = styled.button`
  display: flex;
  align-items: center;
  gap: 3px;
`;

const Status = styled.strong`
  justify-self: end;
  padding-right: 22px;
`;

/* ---------- data ---------- */

type Node = {
  label: string;
  eye?: 'on' | 'off';
  icons: React.ReactNode[];
  level: number;
  tone?: 'root' | 'active';
};

const nodes: Node[] = [
  { label: 'ENSAMBLE v1', eye: 'on', icons: [<AssemblyIcon />], level: 0, tone: 'root' },
  { label: 'Configuración del documento', icons: [<GearIcon />], level: 1 },
  { label: 'Vistas guardadas', icons: [<FolderIcon />], level: 1 },
  { label: 'Origen', eye: 'off', icons: [<FolderIcon />], level: 1 },
  { label: 'BASE v2:1', eye: 'on', icons: [<CubeIcon />, <LinkIcon />], level: 1 },
  { label: 'ANILLO v1:1', eye: 'on', icons: [<CubeIcon />, <LinkIcon />], level: 1, tone: 'active' },
];

const moveTypes = [
  { name: 'Desplazamiento libre', icon: <AxesIcon ring /> },
  { name: 'Traslación', icon: <AxesIcon /> },
  { name: 'Rotación', icon: <RotateIcon /> },
  { name: 'Punto a punto', icon: <PointToPointIcon /> },
  { name: 'Punto a posición', icon: <PointToPositionIcon /> },
];

const values = [
  ['Distancia X', '-100.00 mm'],
  ['Distancia Y', '0.00 mm'],
  ['Distancia Z', '0.00 mm'],
  ['Ángulo X', '0.0 deg'],
  ['Ángulo Y', '0.0 deg'],
  ['Ángulo Z', '0.0 deg'],
];

const tools = [
  { name: 'Órbita', icon: <OrbitIcon />, menu: true },
  { name: 'Mirar a', icon: <LookIcon /> },
  { name: 'Encuadre', icon: <HandIcon /> },
  { name: 'Zoom', icon: <ZoomIcon /> },
  { name: 'Ventana de zoom', icon: <ZoomWindowIcon />, menu: true },
  { name: 'Configuración de visualización', icon: <DisplayIcon />, menu: true },
  { name: 'Rejilla', icon: <GridIcon />, menu: true },
  { name: 'Ventanas gráficas', icon: <ViewportsIcon />, menu: true },
];

export default function App() {
  return (
    <Workspace>
      <GlobalStyle />
      <Scene />
      <Upper>
        <BrowserPanel aria-label="Navegador">
          <Bar>
            <BarLead><RewindIcon /></BarLead>
            <BarTitle>NAVEGADOR</BarTitle>
            <button type="button" aria-label="Contraer"><RoundIcon /></button>
            <Grip />
          </Bar>
          <Tree>
            {nodes.map((n) => (
              <TreeItem key={n.label} $level={n.level}>
                <Toggle type="button" $wide={n.level === 0} aria-label={`Desplegar ${n.label}`}><ToggleIcon open={n.level === 0} /></Toggle>
                <TreeBody>
                  {n.eye && <Slot><EyeIcon off={n.eye === 'off'} /></Slot>}
                  <NodeLabel type="button" $tone={n.tone}>
                    {n.icons.map((icon, i) => <Slot key={i}>{icon}</Slot>)}
                    <NodeText>{n.label}</NodeText>
                  </NodeLabel>
                  {n.tone === 'root' && <Slot><TargetIcon /></Slot>}
                </TreeBody>
              </TreeItem>
            ))}
          </Tree>
        </BrowserPanel>

        <FloatingInput>
          <DragStrip />
          <FloatingBox aria-label="Distancia" defaultValue="-100.00 mm" />
          <MoreButton type="button" aria-label="Más opciones"><Dot /><Dot /><Dot /></MoreButton>
          <IconButton type="button" aria-label="Definir punto de giro"><PivotIcon /></IconButton>
        </FloatingInput>

        <Dialog onSubmit={(e) => e.preventDefault()}>
          <DialogHead>
            <RoundIcon />
            <BarTitle>MOVER/COPIAR</BarTitle>
          </DialogHead>
          <Fields>
            <Field>
              <FieldLabel htmlFor="objeto">Mover objeto</FieldLabel>
              <SelectBox>
                <CubeIcon />
                <Select id="objeto"><option>Componentes</option></Select>
                <CaretIcon />
              </SelectBox>
            </Field>
            <Field>
              <FieldLabel htmlFor="seleccion">Selección</FieldLabel>
              <Controls>
                <PickButton id="seleccion" type="button"><CursorIcon />1 selecciona...</PickButton>
                <ClearButton type="button" aria-label="Borrar selección"><CrossIcon /></ClearButton>
              </Controls>
            </Field>
            <Field>
              <FieldLabel as="span">Tipo de desplazamiento</FieldLabel>
              <Controls role="group" aria-label="Tipo de desplazamiento">
                {moveTypes.map((t, i) => (
                  <IconButton key={t.name} type="button" aria-label={t.name} $on={i === 0}>{t.icon}</IconButton>
                ))}
              </Controls>
            </Field>
            <Field>
              <FieldLabel htmlFor="giro">Definir punto de giro</FieldLabel>
              <IconButton id="giro" type="button"><PivotIcon /></IconButton>
            </Field>
            {values.map(([label, value]) => (
              <Field key={label}>
                <FieldLabel htmlFor={label}>{label}</FieldLabel>
                <TextBox id={label} defaultValue={value} />
              </Field>
            ))}
            <Field>
              <FieldLabel htmlFor="copia" $dim>Crear copia</FieldLabel>
              <CheckBox id="copia" type="checkbox" disabled />
            </Field>
          </Fields>
          <DialogFoot>
            <InfoButton type="button" aria-label="Información"><InfoIcon /></InfoButton>
            <PushButton type="submit">Aceptar</PushButton>
            <PushButton type="button">Cancelar</PushButton>
          </DialogFoot>
        </Dialog>
      </Upper>

      <Lower>
        <Bar $docked>
          <BarLead />
          <BarTitle>COMENTARIOS</BarTitle>
          <button type="button" aria-label="Expandir"><RoundIcon plus /></button>
          <Grip />
        </Bar>
        <NavToolbar role="toolbar" aria-label="Navegación">
          {tools.map((t) => (
            <Tool key={t.name} type="button" aria-label={t.name}>
              {t.icon}
              {t.menu && <CaretIcon />}
            </Tool>
          ))}
        </NavToolbar>
        <Status>ANILLO v1:1</Status>
      </Lower>
    </Workspace>
  );
}
